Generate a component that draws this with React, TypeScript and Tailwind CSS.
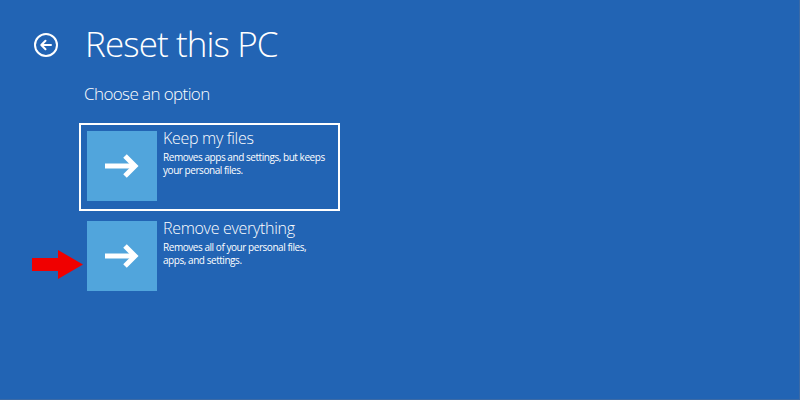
import React, { FC } from 'react'

type Option = {
    title: string;
    desc: string[];
    selected?: boolean;
}

const options: Option[] = [
    { title: 'Keep my files', desc: ['Removes apps and settings, but keeps', 'your personal files.'], selected: true },
    { title: 'Remove everything', desc: ['Removes all of your personal files,', 'apps, and settings.'] },
]

const BackIcon: FC = () => (
    <svg width="24" height="24" viewBox="0 0 24 24" fill="none" stroke="white" strokeWidth="2">
        <circle cx="12" cy="12" r="11" />
        <path d="M17 12H7.5M11.5 7.8L7.3 12l4.2 4.2" strokeLinecap="round" strokeLinejoin="round" />
    </svg>
)

const TileArrow: FC = () => (
    <svg width="34" height="24" viewBox="0 0 34 24" fill="none" stroke="white" strokeWidth="5">
        <path d="M0 12H30" />
        <path d="M20 2L30 12L20 22" />
    </svg>
)

// red pointer drawn next to the second option
const Pointer: FC = () => (
    <svg width="52" height="30" viewBox="0 0 52 30" className="absolute left-[32px] top-[250px]">
        <polygon points="0,8 26,8 26,0 51,14.5 26,29 26,21 0,21" fill="#f00000" />
    </svg>
)

const OptionRow: FC<{ option: Option }> = ({ option }) => (
    <div className={`flex w-[261px] h-[88px] border-2 pl-[6px] pt-[6px] gap-[6px] ${option.selected ? 'border-white' : 'border-transparent'}`}>
        <div className="w-[70px] h-[70px] bg-[#51a5dc] flex items-center justify-center shrink-0">
            <TileArrow />
        </div>
        <div className="flex flex-col -mt-[3px] whitespace-nowrap">
            <div className="text-[16px] leading-[20px] font-light tracking-[-0.3px] text-white">{option.title}</div>
            <div className="mt-[3px] text-[10px] leading-[13px] tracking-[-0.45px] text-white">
                {option.desc.map((line) => <div key={line}>{line}</div>)}
            </div>
        </div>
    </div>
)

const App: FC = () => {
    return (
        <div className="relative w-[800px] h-[400px] bg-[#2264b4] border-r border-b border-[#3b6aa6] overflow-hidden font-['Open_Sans',sans-serif]">
            <div className="flex items-start pt-[26px] pl-[34px]">
                <div className="mt-[7px]">
                    <BackIcon />
                </div>
                <h1 className="ml-[27px] text-[35px] leading-[35px] font-light tracking-[-0.9px] text-white">Reset this PC</h1>
            </div>
            <div className="mt-[21px] ml-[84px] text-[17px] leading-[24px] font-light tracking-[-0.6px] text-white">Choose an option</div>
            <div className="mt-[17px] ml-[79px] flex flex-col gap-[2px]">
                {options.map((o) => <OptionRow key={o.title} option={o} />)}
            </div>
            <Pointer />
        </div>
    )
}

export default App;
